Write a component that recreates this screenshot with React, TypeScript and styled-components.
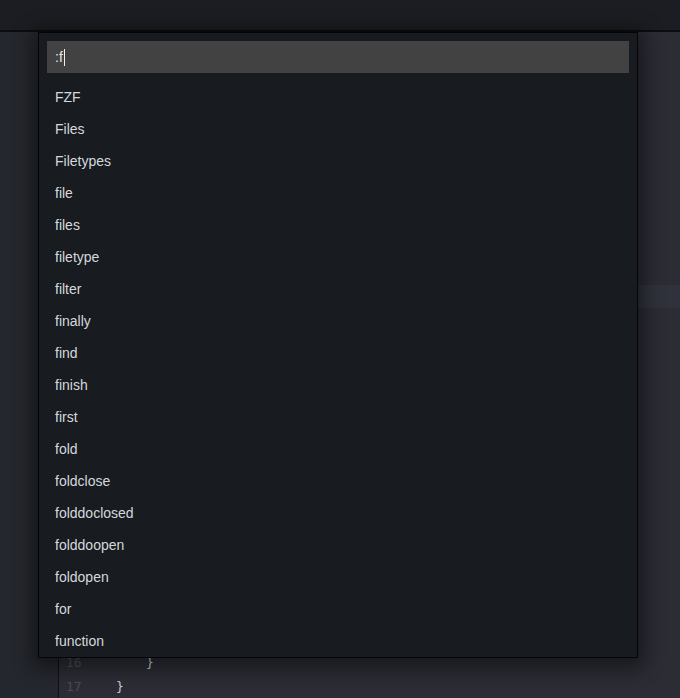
import React from "react";
import styled, { createGlobalStyle } from "styled-components";

const Global = createGlobalStyle`
  html, body { margin: 0; padding: 0; background: #2b2c34; }
  body { font-family: "Liberation Sans", Arial, sans-serif; overflow: hidden; }
  * { box-sizing: border-box; }
`;

const Screen = styled.div`
  position: relative;
  width: 680px;
  height: 698px;
  display: flex;
  flex-direction: column;
  overflow: hidden;
`;

const TopBar = styled.div`
  height: 32px;
  flex: none;
  background: #1b1d22;
  border-bottom: 2px solid #0b0c0e;
`;

const Main = styled.div`
  flex: 1;
  display: flex;
  min-height: 0;
`;

const Sidebar = styled.div`
  width: 59px;
  flex: none;
  background: #25272e;
  border-right: 1px solid #0f1013;
`;

const Editor = styled.div`
  flex: 1;
  background: #2b2c34;
  display: flex;
  flex-direction: column;
  font-family: "DejaVu Sans Mono", monospace;
  font-size: 13px;
`;

const CurrentLine = styled.div`
  margin-top: 253px;
  height: 23px;
  background: #30323b;
`;

const Filler = styled.div`
  flex: 1;
`;

const Line = styled.div`
  height: 24px;
  display: flex;
  align-items: center;
`;

const LineNo = styled.span`
  width: 48px;
  padding-left: 7px;
  color: #4a4d56;
  flex: none;
`;

const Code = styled.span<{ $indent: number }>`
  padding-left: ${(p) => p.$indent}px;
  color: #c9ccd2;
`;

const Palette = styled.div`
  position: absolute;
  left: 38px;
  top: 32px;
  width: 600px;
  height: 626px;
  background: #181b1f;
  border: 1px solid #050506;
  padding: 8px 8px 0;
  box-shadow: 0 4px 18px 6px rgba(0, 0, 0, 0.45);
  display: flex;
  flex-direction: column;
`;

const Input = styled.div`
  height: 32px;
  background: #424242;
  display: flex;
  align-items: center;
  padding-left: 8px;
  color: #e4e4e4;
  font-size: 14px;
  margin-bottom: 8px;
  flex: none;
`;

const Caret = styled.span`
  display: inline-block;
  width: 1px;
  height: 17px;
  background: #f0f0f0;
  margin-left: 1px;
`;

const List = styled.div`
  display: flex;
  flex-direction: column;
`;

const Item = styled.div`
  height: 32px;
  display: flex;
  align-items: center;
  padding-left: 8px;
  font-size: 14px;
  color: #d5d8de;
`;

const items = [
  "FZF",
  "Files",
  "Filetypes",
  "file",
  "files",
  "filetype",
  "filter",
  "finally",
  "find",
  "finish",
  "first",
  "fold",
  "foldclose",
  "folddoclosed",
  "folddoopen",
  "foldopen",
  "for",
  "function",
];

export default function App() {
  return (
    <>
      <Global />
      <Screen>
        <TopBar />
        <Main>
          <Sidebar />
          <Editor>
            <CurrentLine />
            <Filler />
            <Line>
              <LineNo>16</LineNo>
              <Code $indent={39}>{"}"}</Code>
            </Line>
            <Line>
              <LineNo>17</LineNo>
              <Code $indent={9}>{"}"}</Code>
            </Line>
          </Editor>
        </Main>
        <Palette>
          <Input>
            :f
            <Caret />
          </Input>
          <List>
            {items.map((t) => (
              <Item key={t}>{t}</Item>
            ))}
          </List>
        </Palette>
      </Screen>
    </>
  );
}
